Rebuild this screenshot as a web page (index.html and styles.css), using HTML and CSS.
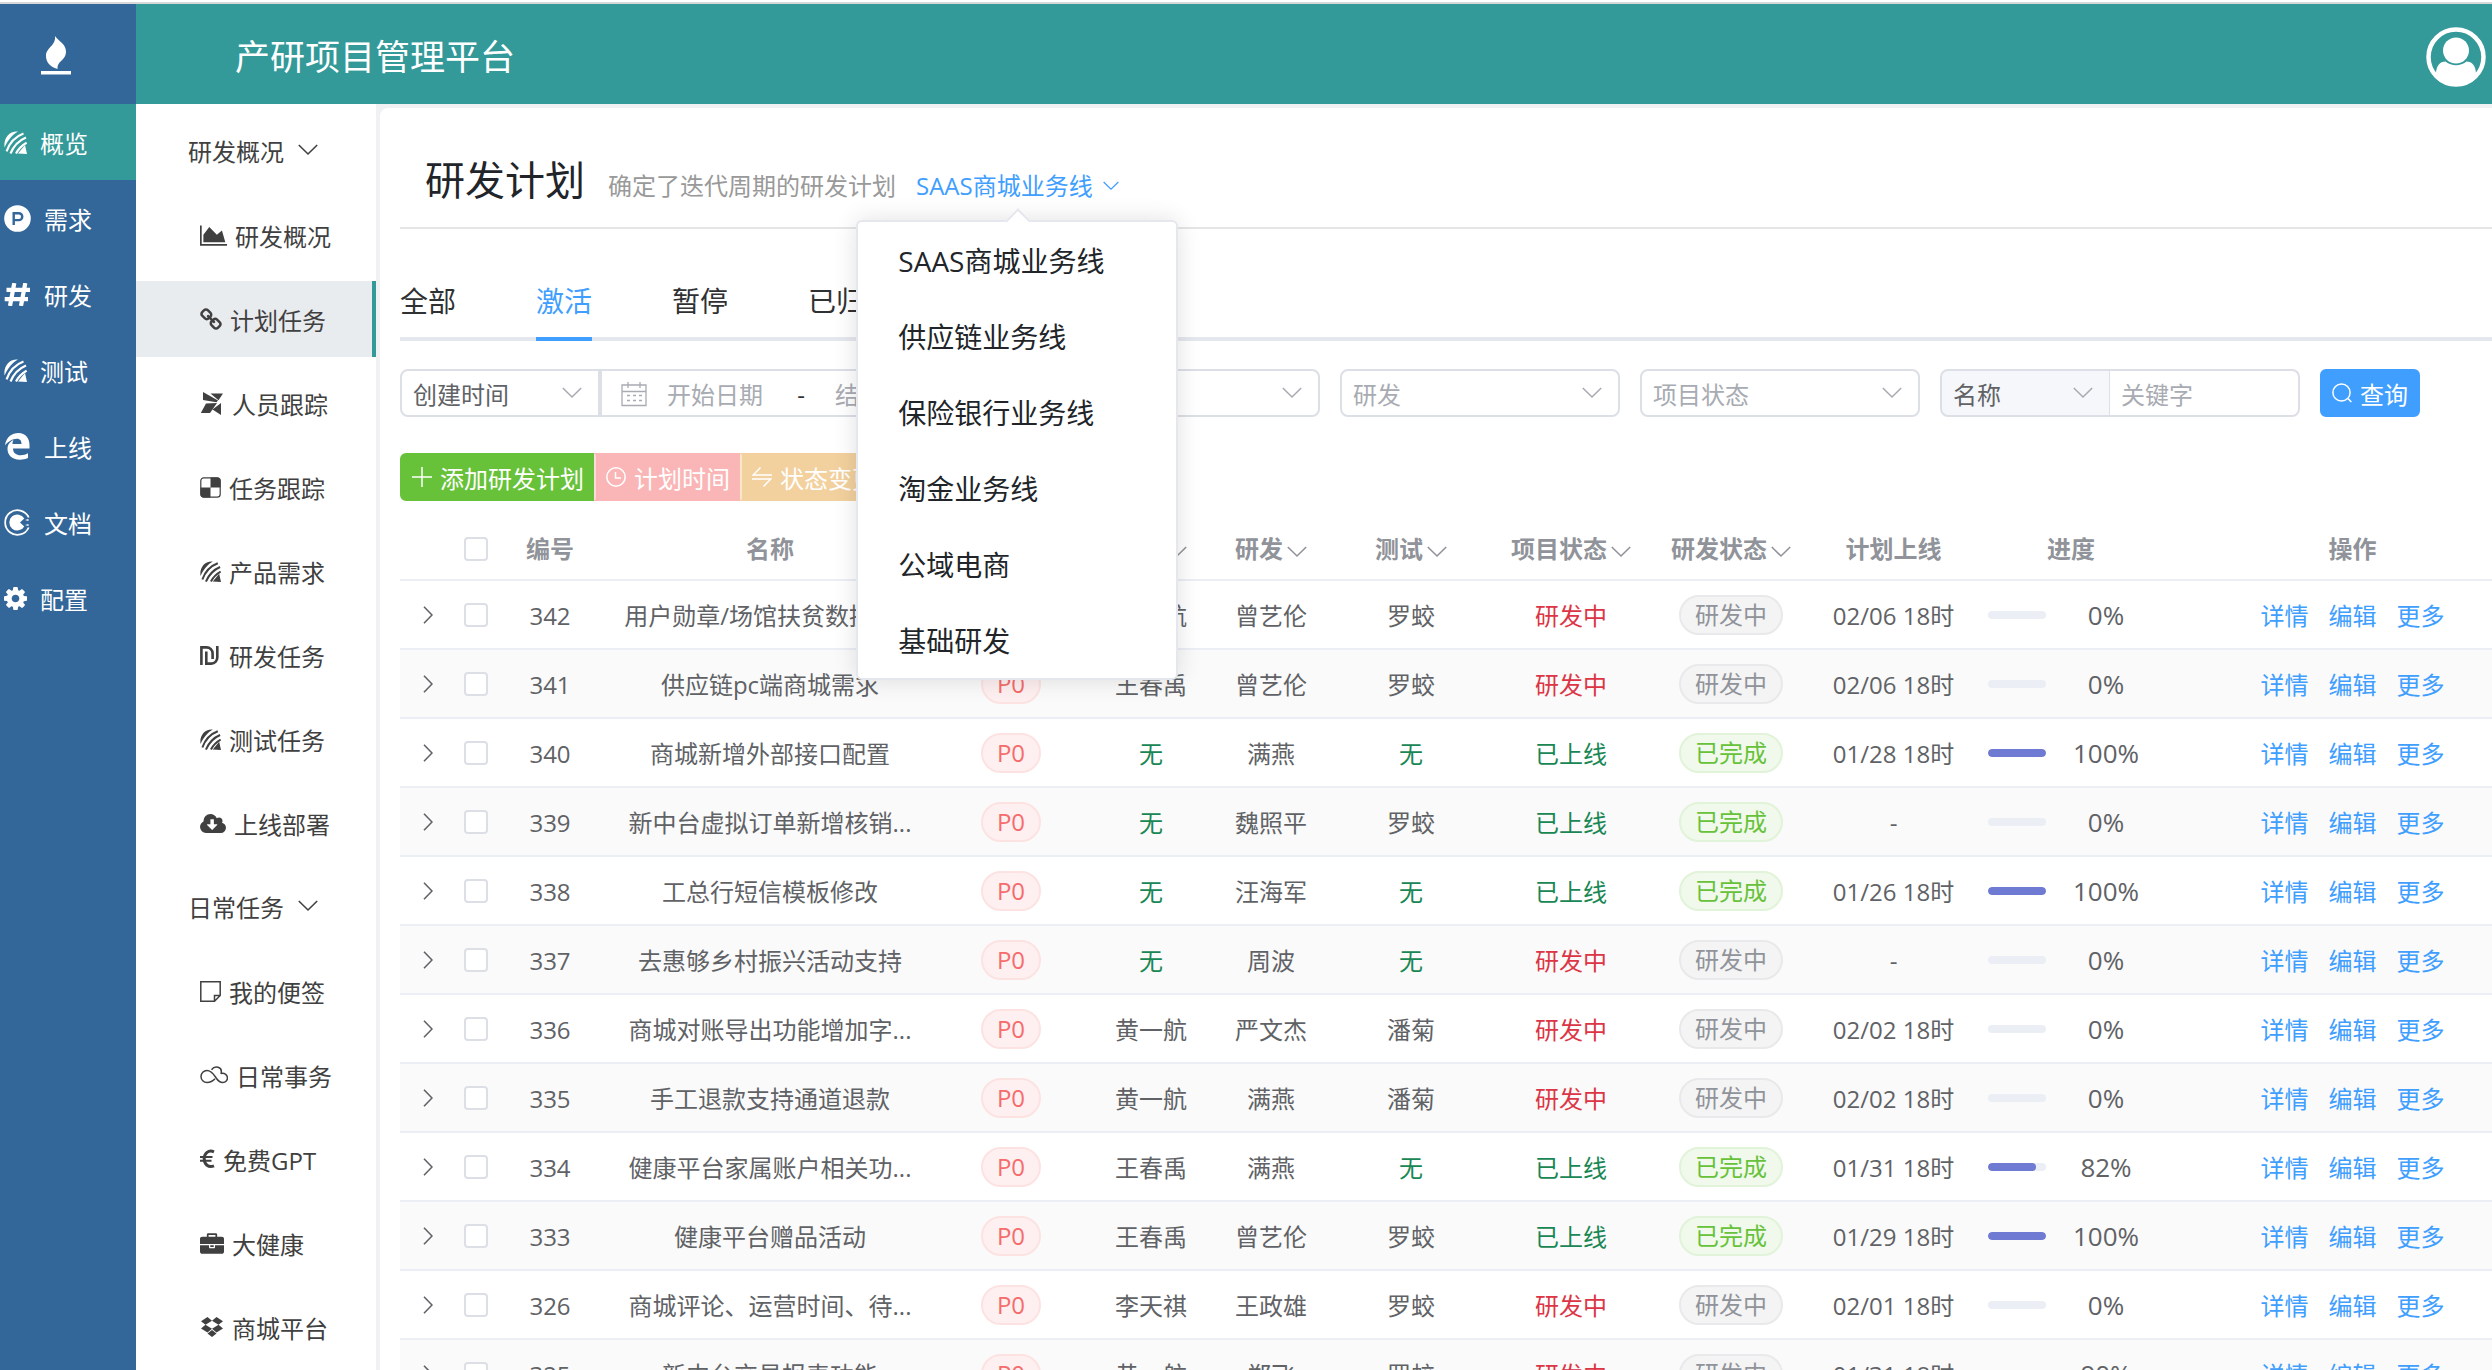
FILE: index.html
```html
<!DOCTYPE html>
<html lang="zh-CN">
<head>
<meta charset="utf-8">
<title>产研项目管理平台</title>
<link rel="stylesheet" href="styles.css">
</head>
<body>
<svg class="sprite" aria-hidden="true">
  <symbol id="bee" viewBox="0 0 23 23"><path fill="currentColor" d="M.6 16.500C-.8 7.500 5 -.3 14 .5 8.500 3.500 3.500 9.500.6 16.500z"/><path fill="none" stroke="currentColor" stroke-width="2.200" d="M2.600 20.300C5.500 12 11.500 5.500 19.500 2.500M6.500 22.500C9.500 15.500 14.500 9.800 22 6.600M12 22.500C14 18.500 17 14.800 22.600 11.600"/><path fill="currentColor" d="M14 22.500 21 14l2 9z"/></symbol>
  <symbol id="down" viewBox="0 0 20 12"><path fill="none" stroke="currentColor" stroke-width="1.600" d="m.8 1 9.200 9 9.200-9"/></symbol>
  <symbol id="right" viewBox="0 0 10 18"><path fill="none" stroke="currentColor" stroke-width="1.600" d="m1 .8 8 8.200-8 8.200"/></symbol>
  <symbol id="cog" viewBox="128 128 1536 1536"><path fill="currentColor" d="M1152 896q0-106-75-181t-181-75-181 75-75 181 75 181 181 75 181-75 75-181zm512-109v222q0 12-8 23t-20 13l-185 28q-19 54-39 91 35 50 107 138 10 12 10 25t-9 23q-27 37-99 108t-94 71q-12 0-26-9l-138-108q-44 23-91 38-16 136-29 186-7 28-36 28h-222q-14 0-24.500-8.500t-11.500-21.500l-28-184q-49-16-90-37l-141 107q-10 9-25 9-14 0-25-11-126-114-165-168-7-10-7-23 0-12 8-23 15-21 51-66.500t54-70.500q-27-50-41-99l-183-27q-13-2-21-12.500t-8-23.500v-222q0-12 8-23t19-13l186-28q14-46 39-92-40-57-107-138-10-12-10-24 0-10 9-23 26-36 98.500-107.500t94.500-71.500q13 0 26 10l138 107q44-23 91-38 16-136 29-186 7-28 36-28h222q14 0 24.500 8.500t11.500 21.500l28 184q49 16 90 37l142-107q9-9 24-9 13 0 25 10 129 119 165 170 7 8 7 22 0 12-8 23-15 21-51 66.500t-54 70.500q26 50 41 98l183 28q13 2 21 12.500t8 23.500z"/></symbol>
</svg>
<div class="app">
  <header class="topbar">
    <a class="logo" href="#" aria-label="首页"><svg width="30" height="39" viewBox="0 0 30 39" fill="currentColor"><path d="M14 0C18 6 25 7.500 25 16 25 24.500 15.500 25 16.500 33 9 31 5 26 5 20 5 11.500 15 10 14 0z"/><path d="M0 35h30v3.500H0z"/></svg></a>
    <div class="brand">
      <h1>产研项目管理平台</h1>
      <button class="avatar" type="button" aria-label="用户"><svg width="60" height="60" viewBox="-30 -30 60 60"><circle r="27.500" fill="none" stroke="currentColor" stroke-width="4.500"/><ellipse cy="-6.500" rx="13" ry="13" fill="currentColor"/><path fill="currentColor" d="M-20 17C-20 9-16 4.500-10.500 4.500-4 9.500 4 9.500 10.500 4.500 16 4.500 20 9 20 17 9 30-9 30-20 17z"/></svg></button>
    </div>
  </header>
  <div class="shell">
    <nav class="rail">
      <a class="on" href="#"><svg width="23" height="23"><use href="#bee"/></svg>概览</a>
      <a href="#"><svg width="27" height="27" viewBox="0 0 27 27"><circle cx="13.500" cy="13.500" r="13.300" fill="currentColor"/><path fill="none" stroke="#336699" stroke-width="2.400" d="M9.700 20V8.200h5.100a3.400 3.400 0 0 1 0 6.900H9.700"/></svg>需求</a>
      <a href="#"><svg width="27" height="23" viewBox="0 0 27 23"><path fill="none" stroke="currentColor" stroke-width="4.200" d="M10.300 0 6 23M21.300 0 17 23M2.500 6.800H26M.7 16.200H24"/></svg>研发</a>
      <a href="#"><svg width="23" height="23"><use href="#bee"/></svg>测试</a>
      <a href="#"><svg width="27" height="27" viewBox="0 0 27 27"><path fill="currentColor" d="M1 12.500C2 4 8 0 14.500 0 21.500 0 25.500 5 25.500 12v3.500H9c0 4.500 3.500 6.800 7.500 6.800 3 0 5.500-.8 7.500-2V25c-2.500 1.200-5.500 1.700-8 1.700-8.500 0-12.500-5.200-12.500-10.700 0-5 3-7.500 6-9C8.700 8.300 8.500 9.800 8.500 11h9c0-3-1.200-5.300-4.500-5.300C8.500 5.700 4 8.500 1 12.500z"/></svg>上线</a>
      <a href="#"><svg width="27" height="27" viewBox="0 0 27 27"><path fill="none" stroke="currentColor" stroke-width="1.800" d="M24.700 8.500a12.300 12.300 0 1 0 0 10"/><path fill="currentColor" d="M20.300 9.600a8 8 0 1 0 0 7.800L16 13.500zM21 11l3.500-1v2zM21 16l3.500 1v-2z"/></svg>文档</a>
      <a href="#"><svg width="23" height="23"><use href="#cog"/></svg>配置</a>
    </nav>
    <nav class="side">
      <button class="group" type="button">研发概况<svg width="20" height="12"><use href="#down"/></svg></button>
      <a href="#"><svg width="27" height="21" viewBox="0 128 2048 1536"><path fill="currentColor" d="M2048 1536v128H0V128h128v1408h1920zM1664 512l256 896H256V832l448-576 576 576z"/></svg>研发概况</a>
      <a class="on" href="#"><svg width="22" height="22" viewBox="64 0 1664 1664"><path fill="currentColor" d="M1520 1216q0-40-28-68l-208-208q-28-28-68-28-42 0-72 32 3 3 19 18.500t21.500 21.500 15 19 13 25.500 3.500 27.500q0 40-28 68t-68 28q-15 0-27.500-3.500t-25.500-13-19-15-21.500-21.500-18.500-19q-33 31-33 73 0 40 28 68l206 207q27 27 68 27 40 0 68-26l147-146q28-28 28-67zm-703-705q0-40-28-68l-206-207q-28-28-68-28-39 0-68 27l-147 146q-28 28-28 67 0 40 28 68l208 208q27 27 68 27 42 0 72-31-3-3-19-18.500t-21.500-21.500-15-19-13-25.500-3.500-27.500q0-40 28-68t68-28q15 0 27.500 3.500t25.500 13 19 15 21.500 21.500 18.500 19q33-31 33-73zm895 705q0 120-85 203l-147 146q-83 83-203 83-121 0-204-85l-206-207q-83-83-83-203 0-123 88-209l-88-88q-86 88-208 88-120 0-204-84l-208-208q-84-84-84-204t85-203l147-146q83-83 203-83 121 0 204 85l206 207q83 83 83 203 0 123-88 209l88 88q86-88 208-88 120 0 204 84l208 208q84 84 84 204z"/></svg>计划任务</a>
      <a href="#"><svg width="24" height="23" viewBox="0 0 24 23" fill="currentColor"><path d="M3 0l15 8.500-1.500 1.800L3 8zM10.500 1.500H23L18.500 8.300zM.8 21 6 11.500 17 11l-7 10zM21 11v12l-8.500-5.500z"/></svg>人员跟踪</a>
      <a href="#"><svg width="21" height="21" viewBox="0 0 21 21"><rect x=".8" y=".8" width="19.400" height="19.400" rx="3" fill="none" stroke="currentColor" stroke-width="1.200"/><path fill="currentColor" d="M10.500.5H17a3.500 3.500 0 0 1 3.500 3.500v6.500h-10zM.5 10.500h10v10H4A3.500 3.500 0 0 1 .5 17z"/></svg>任务跟踪</a>
      <a href="#"><svg width="21" height="21"><use href="#bee"/></svg>产品需求</a>
      <a href="#"><svg width="21" height="19" viewBox="0 0 21 19"><path fill="none" stroke="currentColor" stroke-width="2.600" d="M1.400 19V1.400h5.200a6 6 0 0 1 6 6V13M6.300 5.500v12.100h5a6 6 0 0 0 6-6V0"/></svg>研发任务</a>
      <a href="#"><svg width="21" height="21"><use href="#bee"/></svg>测试任务</a>
      <a href="#"><svg width="26" height="19" viewBox="-64 128 1920 1408"><path fill="currentColor" d="M1216 928q0-14-9-23t-23-9h-224v-352q0-13-9.500-22.500t-22.500-9.500h-192q-13 0-22.500 9.500t-9.500 22.500v352h-224q-13 0-22.500 9.500t-9.500 22.500q0 14 9 23l352 352q9 9 23 9t23-9l351-351q10-12 10-24zm640 224q0 159-112.500 271.500t-271.500 112.500h-1088q-185 0-316.500-131.500t-131.500-316.500q0-130 70-240t188-165q-2-30-2-43 0-212 150-362t362-150q156 0 285.500 87t188.500 231q71-62 166-62 106 0 181 75t75 181q0 76-41 138 130 31 213.500 135.500t83.500 238.500z"/></svg>上线部署</a>
      <button class="group" type="button">日常任务<svg width="20" height="12"><use href="#down"/></svg></button>
      <a href="#"><svg width="21" height="21" viewBox="0 0 21 21"><path fill="none" stroke="currentColor" stroke-width="1.500" d="M14.500 20.200H.8V.8h19.400v13.700zv-5.700h5.700"/></svg>我的便签</a>
      <a href="#"><svg width="28" height="18" viewBox="0 0 28 18"><path fill="none" stroke="currentColor" stroke-width="1.500" d="M15 12.800C12.500 15.500 9.800 16.500 7 16.500A6 6 0 0 1 7 4.500c5 0 7 4.500 9.500 8 2 2.800 4 4 6.200 4a4.600 4.600 0 1 0-1.200-9M11.500 3.800C14.500-.5 23 0 21 8"/></svg>日常事务</a>
      <a href="#"><svg width="15" height="20" viewBox="0 0 15 20"><path fill="none" stroke="currentColor" stroke-width="3" d="M14 2.800C8.500.5 4.200 4.200 4.200 9.800S8.500 19 14 16.800"/><path fill="none" stroke="currentColor" stroke-width="1.900" d="M0 8h12.500M0 11.700h11.500"/></svg>免费GPT</a>
      <a href="#"><svg width="24" height="21" viewBox="0 0 1792 1536"><path fill="currentColor" d="M640 256h512v-128h-512v128zm1152 640v480q0 66-47 113t-113 47h-1472q-66 0-113-47t-47-113v-480h672v160q0 26 19 45t45 19h320q26 0 45-19t19-45v-160h672zm-768 0v128h-256v-128h256zm768-480v384h-1792v-384q0-66 47-113t113-47h352v-160q0-40 28-68t68-28h576q40 0 68 28t28 68v160h352q66 0 113 47t47 113z"/></svg>大健康</a>
      <a href="#"><svg width="24" height="20" viewBox="-1 0 24 20" fill="currentColor"><path d="M6.500 0 0 4.200l4.500 3.600 6.500-4zM15.500 0 22 4.200l-4.500 3.600-6.500-4zM0 11.500l4.500-3.700 6.500 4-4.500 3.700zM22 11.500l-4.500-3.700-6.500 4 4.500 3.700zM6.500 16.500 11 13l4.500 3.500L11 20z"/></svg>商城平台</a>
    </nav>
    <main class="main">
      <div class="content">
        <div class="page-head">
          <h2>研发计划</h2>
          <p>确定了迭代周期的研发计划</p>
          <div class="line-picker">
            <button class="line-now" type="button" aria-haspopup="true" aria-expanded="true">SAAS商城业务线<svg width="16" height="10"><use href="#down"/></svg></button>
            <ul class="menu">
              <li><a href="#">SAAS商城业务线</a></li>
              <li><a href="#">供应链业务线</a></li>
              <li><a href="#">保险银行业务线</a></li>
              <li><a href="#">淘金业务线</a></li>
              <li><a href="#">公域电商</a></li>
              <li><a href="#">基础研发</a></li>
            </ul>
          </div>
        </div>
        <div class="tabs" role="tablist">
          <button type="button" role="tab">全部</button>
          <button type="button" role="tab" class="on" aria-selected="true">激活</button>
          <button type="button" role="tab">暂停</button>
          <button type="button" role="tab">已归档</button>
        </div>
        <form class="filters">
          <div class="joined">
            <select class="field kind" aria-label="时间类型"><option>创建时间</option></select>
            <div class="field dates">
              <svg width="26" height="26" viewBox="0 0 26 26"><path fill="none" stroke="currentColor" stroke-width="1.300" d="M1 4h24v20.500H1zM1 10.500h24M7 1v6M19 1v6"/><path fill="none" stroke="currentColor" stroke-width="1.600" stroke-dasharray="3 3" d="M6 14.500h15M6 19.500h15"/></svg>
              <input type="text" placeholder="开始日期" aria-label="开始日期"><span>-</span><input type="text" placeholder="结束日期" aria-label="结束日期">
            </div>
          </div>
          <select class="field pick" aria-label="产品"><option>产品</option></select>
          <select class="field pick" aria-label="研发"><option>研发</option></select>
          <select class="field pick" aria-label="项目状态"><option>项目状态</option></select>
          <div class="joined">
            <select class="field by" aria-label="搜索字段"><option>名称</option></select>
            <input class="field key" type="text" placeholder="关键字" aria-label="关键字">
          </div>
          <button class="btn search" type="button"><svg width="20" height="20" viewBox="0 0 20 20"><path fill="none" stroke="currentColor" stroke-width="1.500" d="M16 15.500 19.300 19"/><circle cx="9.500" cy="9.500" r="8.600" fill="none" stroke="currentColor" stroke-width="1.500"/></svg>查询</button>
        </form>
        <div class="actions">
          <button class="btn add" type="button"><svg width="20" height="20" viewBox="0 0 20 20"><path stroke="currentColor" stroke-width="1.500" d="M10 0v20M0 10h20"/></svg>添加研发计划</button>
          <button class="btn time" type="button"><svg width="20" height="20" viewBox="0 0 20 20"><path fill="none" stroke="currentColor" stroke-width="1.500" d="M9.500 5v6H15"/><circle cx="10" cy="10" r="9.200" fill="none" stroke="currentColor" stroke-width="1.500"/></svg>计划时间</button>
          <button class="btn state" type="button"><svg width="20" height="20" viewBox="0 0 20 20"><path fill="none" stroke="currentColor" stroke-width="1.500" d="M8.500.5 1.200 8H20M0 12h18.800l-7.300 7.500"/></svg>状态变更</button>
        </div>
        <table class="plans">
          <colgroup><col class="w56"><col class="w40"><col class="w108"><col><col class="w150"><col class="w130"><col class="w110"><col class="w170"><col class="w150"><col class="w170"><col class="w155"><col class="w200"><col class="ops-col"></colgroup>
          <thead><tr><th></th><th><input type="checkbox" aria-label="全选"></th><th>编号</th><th>名称</th><th>优先级</th><th>产品<svg width="20" height="12"><use href="#down"/></svg></th><th>研发<svg width="20" height="12"><use href="#down"/></svg></th><th>测试<svg width="20" height="12"><use href="#down"/></svg></th><th>项目状态<svg width="20" height="12"><use href="#down"/></svg></th><th>研发状态<svg width="20" height="12"><use href="#down"/></svg></th><th>计划上线</th><th>进度</th><th class="ops">操作</th></tr></thead>
          <tbody>
            <tr><td class="ctl"><svg width="10" height="18"><use href="#right"/></svg></td><td class="ctl"><input type="checkbox" aria-label="选择342"></td><td>342</td><td class="name">用户勋章/场馆扶贫数据统...</td><td class="ctl"><span class="tag p0">P0</span></td><td>黄一航</td><td>曾艺伦</td><td>罗蛟</td><td class="red">研发中</td><td class="ctl"><span class="tag">研发中</span></td><td>02/06 18时</td><td class="ctl"><div class="prog"><i><b style="width:0%"></b></i><span>0%</span></div></td><td class="ops"><a href="#">详情</a><a href="#">编辑</a><a href="#">更多</a></td></tr>
            <tr><td class="ctl"><svg width="10" height="18"><use href="#right"/></svg></td><td class="ctl"><input type="checkbox" aria-label="选择341"></td><td>341</td><td class="name">供应链pc端商城需求</td><td class="ctl"><span class="tag p0">P0</span></td><td>王春禹</td><td>曾艺伦</td><td>罗蛟</td><td class="red">研发中</td><td class="ctl"><span class="tag">研发中</span></td><td>02/06 18时</td><td class="ctl"><div class="prog"><i><b style="width:0%"></b></i><span>0%</span></div></td><td class="ops"><a href="#">详情</a><a href="#">编辑</a><a href="#">更多</a></td></tr>
            <tr><td class="ctl"><svg width="10" height="18"><use href="#right"/></svg></td><td class="ctl"><input type="checkbox" aria-label="选择340"></td><td>340</td><td class="name">商城新增外部接口配置</td><td class="ctl"><span class="tag p0">P0</span></td><td class="green">无</td><td>满燕</td><td class="green">无</td><td class="green">已上线</td><td class="ctl"><span class="tag done">已完成</span></td><td>01/28 18时</td><td class="ctl"><div class="prog"><i><b style="width:100%"></b></i><span>100%</span></div></td><td class="ops"><a href="#">详情</a><a href="#">编辑</a><a href="#">更多</a></td></tr>
            <tr><td class="ctl"><svg width="10" height="18"><use href="#right"/></svg></td><td class="ctl"><input type="checkbox" aria-label="选择339"></td><td>339</td><td class="name">新中台虚拟订单新增核销...</td><td class="ctl"><span class="tag p0">P0</span></td><td class="green">无</td><td>魏照平</td><td>罗蛟</td><td class="green">已上线</td><td class="ctl"><span class="tag done">已完成</span></td><td>-</td><td class="ctl"><div class="prog"><i><b style="width:0%"></b></i><span>0%</span></div></td><td class="ops"><a href="#">详情</a><a href="#">编辑</a><a href="#">更多</a></td></tr>
            <tr><td class="ctl"><svg width="10" height="18"><use href="#right"/></svg></td><td class="ctl"><input type="checkbox" aria-label="选择338"></td><td>338</td><td class="name">工总行短信模板修改</td><td class="ctl"><span class="tag p0">P0</span></td><td class="green">无</td><td>汪海军</td><td class="green">无</td><td class="green">已上线</td><td class="ctl"><span class="tag done">已完成</span></td><td>01/26 18时</td><td class="ctl"><div class="prog"><i><b style="width:100%"></b></i><span>100%</span></div></td><td class="ops"><a href="#">详情</a><a href="#">编辑</a><a href="#">更多</a></td></tr>
            <tr><td class="ctl"><svg width="10" height="18"><use href="#right"/></svg></td><td class="ctl"><input type="checkbox" aria-label="选择337"></td><td>337</td><td class="name">去惠够乡村振兴活动支持</td><td class="ctl"><span class="tag p0">P0</span></td><td class="green">无</td><td>周波</td><td class="green">无</td><td class="red">研发中</td><td class="ctl"><span class="tag">研发中</span></td><td>-</td><td class="ctl"><div class="prog"><i><b style="width:0%"></b></i><span>0%</span></div></td><td class="ops"><a href="#">详情</a><a href="#">编辑</a><a href="#">更多</a></td></tr>
            <tr><td class="ctl"><svg width="10" height="18"><use href="#right"/></svg></td><td class="ctl"><input type="checkbox" aria-label="选择336"></td><td>336</td><td class="name">商城对账导出功能增加字...</td><td class="ctl"><span class="tag p0">P0</span></td><td>黄一航</td><td>严文杰</td><td>潘菊</td><td class="red">研发中</td><td class="ctl"><span class="tag">研发中</span></td><td>02/02 18时</td><td class="ctl"><div class="prog"><i><b style="width:0%"></b></i><span>0%</span></div></td><td class="ops"><a href="#">详情</a><a href="#">编辑</a><a href="#">更多</a></td></tr>
            <tr><td class="ctl"><svg width="10" height="18"><use href="#right"/></svg></td><td class="ctl"><input type="checkbox" aria-label="选择335"></td><td>335</td><td class="name">手工退款支持通道退款</td><td class="ctl"><span class="tag p0">P0</span></td><td>黄一航</td><td>满燕</td><td>潘菊</td><td class="red">研发中</td><td class="ctl"><span class="tag">研发中</span></td><td>02/02 18时</td><td class="ctl"><div class="prog"><i><b style="width:0%"></b></i><span>0%</span></div></td><td class="ops"><a href="#">详情</a><a href="#">编辑</a><a href="#">更多</a></td></tr>
            <tr><td class="ctl"><svg width="10" height="18"><use href="#right"/></svg></td><td class="ctl"><input type="checkbox" aria-label="选择334"></td><td>334</td><td class="name">健康平台家属账户相关功...</td><td class="ctl"><span class="tag p0">P0</span></td><td>王春禹</td><td>满燕</td><td class="green">无</td><td class="green">已上线</td><td class="ctl"><span class="tag done">已完成</span></td><td>01/31 18时</td><td class="ctl"><div class="prog"><i><b style="width:82%"></b></i><span>82%</span></div></td><td class="ops"><a href="#">详情</a><a href="#">编辑</a><a href="#">更多</a></td></tr>
            <tr><td class="ctl"><svg width="10" height="18"><use href="#right"/></svg></td><td class="ctl"><input type="checkbox" aria-label="选择333"></td><td>333</td><td class="name">健康平台赠品活动</td><td class="ctl"><span class="tag p0">P0</span></td><td>王春禹</td><td>曾艺伦</td><td>罗蛟</td><td class="green">已上线</td><td class="ctl"><span class="tag done">已完成</span></td><td>01/29 18时</td><td class="ctl"><div class="prog"><i><b style="width:100%"></b></i><span>100%</span></div></td><td class="ops"><a href="#">详情</a><a href="#">编辑</a><a href="#">更多</a></td></tr>
            <tr><td class="ctl"><svg width="10" height="18"><use href="#right"/></svg></td><td class="ctl"><input type="checkbox" aria-label="选择326"></td><td>326</td><td class="name">商城评论、运营时间、待...</td><td class="ctl"><span class="tag p0">P0</span></td><td>李天祺</td><td>王政雄</td><td>罗蛟</td><td class="red">研发中</td><td class="ctl"><span class="tag">研发中</span></td><td>02/01 18时</td><td class="ctl"><div class="prog"><i><b style="width:0%"></b></i><span>0%</span></div></td><td class="ops"><a href="#">详情</a><a href="#">编辑</a><a href="#">更多</a></td></tr>
            <tr><td class="ctl"><svg width="10" height="18"><use href="#right"/></svg></td><td class="ctl"><input type="checkbox" aria-label="选择325"></td><td>325</td><td class="name">新中台交易报表功能</td><td class="ctl"><span class="tag p0">P0</span></td><td>黄一航</td><td>郑飞</td><td>罗蛟</td><td class="red">研发中</td><td class="ctl"><span class="tag">研发中</span></td><td>01/31 18时</td><td class="ctl"><div class="prog"><i><b style="width:90%"></b></i><span>90%</span></div></td><td class="ops"><a href="#">详情</a><a href="#">编辑</a><a href="#">更多</a></td></tr>
          </tbody>
        </table>
      </div>
    </main>
  </div>
</div>
</body>
</html>
```
FILE: styles.css
```css
* { box-sizing: border-box; }
body, h1, h2, p, ul { margin: 0; padding: 0; }
body {
  font-family: "Open Sans", "Noto Sans CJK SC", sans-serif;
  font-size: 24px;
  color: #606266;
  background: #fff;
}
a { color: inherit; text-decoration: none; }
button, input, select { font: inherit; color: inherit; }
button { background: none; border: 0; padding: 0; margin: 0; cursor: pointer; }
svg { flex: none; }
.sprite { display: none; }

.app { display: flex; flex-direction: column; height: 100vh; overflow: hidden; padding-top: 2px; }

/* top bar */
.topbar { display: flex; flex: none; height: 102px; border-top: 2px solid #d8d8d8; color: #fff; }
.logo { width: 136px; background: #336699; display: flex; align-items: center; padding: 2px 0 0 41px; }
.brand { flex: 1; background: #339999; display: flex; align-items: center; justify-content: space-between; padding: 6px 6px 0 99px; }
.brand h1 { font-size: 35px; font-weight: 400; line-height: 48px; }
.avatar { color: #fff; display: flex; }

.shell { flex: 1; min-height: 0; display: flex; }

/* primary navigation */
.rail { flex: none; width: 136px; background: #336699; color: #fff; }
.rail a { display: flex; align-items: center; height: 76px; padding: 0 0 0 4px; gap: 13px; }
.rail .on { background: #339999; }

/* secondary navigation */
.side { flex: none; width: 240px; padding-top: 9px; color: #404040; overflow: hidden; display: flex; flex-direction: column; gap: 8px; }
.side a, .side .group { display: flex; flex: none; align-items: center; height: 76px; padding: 0 0 0 64px; gap: 8px; }
.side .group { padding: 0 0 2px 52px; gap: 14px; }
.side .on { background: #e9ecef; border-right: 4px solid #339999; }

/* content */
.main { flex: 1; min-width: 0; background: #eff1f2; padding: 4px 0 0 4px; }
.content { height: 100%; background: #fff; border-radius: 8px 0 0 0; padding-left: 20px; }

.page-head { display: flex; align-items: baseline; padding: 42px 0 17px 25px; border-bottom: 2px solid #e5e5e5; }
.page-head h2 { font-size: 40px; font-weight: 400; line-height: 60px; color: #212529; }
.page-head p { margin: 0 20px 0 23px; color: #999; line-height: 36px; }
.line-picker { position: relative; line-height: 36px; }
.line-now { color: #409eff; display: flex; align-items: center; gap: 10px; line-height: 36px; }
.menu {
  position: absolute; z-index: 5; top: calc(100% + 16px); left: calc(50% - 161px); width: 322px;
  list-style: none; background: #fff; border: 2px solid #e4e7ed; border-radius: 6px;
  box-shadow: 0 0 24px rgba(0, 0, 0, .12);
}
.menu::before {
  content: ""; position: absolute; top: -10px; left: calc(50% - 8px); width: 16px; height: 16px;
  background: #fff; border: solid #e4e7ed; border-width: 2px 0 0 2px; transform: rotate(45deg);
}
.menu a { position: relative; display: block; height: 76px; padding: 1px 0 0 40px; font-size: 28px; line-height: 76px; color: #212529; }

.tabs { display: flex; gap: 80px; margin-top: 32px; border-bottom: 4px solid #e4e7ed; }
.tabs button { height: 80px; padding-top: 4px; font-size: 28px; line-height: 72px; color: #303133; border-bottom: 4px solid transparent; margin-bottom: -4px; }
.tabs .on { color: #409eff; border-color: #409eff; }

/* filters */
.filters { display: flex; gap: 20px; margin-top: 28px; }
.joined { display: flex; }
.field { height: 48px; border: 2px solid #dcdfe6; border-radius: 8px; padding: 2px 11px 0; background: #fff; color: #606266; }
select.field {
  appearance: none;
  background: #fff url("data:image/svg+xml,%3Csvg xmlns='http://www.w3.org/2000/svg' viewBox='0 0 20 12'%3E%3Cpath fill='none' stroke='%23a8abb2' stroke-width='1.6' d='m.8 1 9.200 9 9.200-9'/%3E%3C/svg%3E") no-repeat right 16px center / 20px 12px;
}
.field::placeholder, .dates input::placeholder { color: #a8abb2; opacity: 1; }
.kind { width: 200px; border-radius: 8px 0 0 8px; }
.dates { width: 420px; border-radius: 0 8px 8px 0; display: flex; align-items: center; padding-left: 19px; color: #a8abb2; }
.dates input { width: 140px; border: 0; padding: 0 0 0 20px; background: none; }
.dates span { width: 28px; text-align: center; color: #303133; }
select.pick { width: 280px; color: #a8abb2; }
select.by { width: 170px; border-radius: 8px 0 0 8px; border-right-width: 1px; background-color: #f5f7fa; }
.key { width: 190px; border-radius: 0 8px 8px 0; border-left-width: 0; }

/* buttons */
.btn { display: flex; align-items: center; gap: 8px; height: 48px; padding: 0 10px; color: #fff; border: 2px solid transparent; }
.search { background: #409eff; border-color: #409eff; border-radius: 6px; }
.actions { display: flex; margin-top: 36px; }
.btn.add { background: #67c23a; border-color: #67c23a; border-radius: 6px 0 0 6px; }
.btn.time { background: #fab6b6; border-color: #fab6b6; border-left-color: #fcdada; margin-left: -2px; }
.btn.state { background: #f3d19e; border-color: #f3d19e; border-left-color: #f9e6c8; margin-left: -2px; border-radius: 0 6px 6px 0; }

/* table */
.plans { width: 100%; margin-top: 16px; border-collapse: separate; border-spacing: 0; table-layout: fixed; text-align: center; }
.w40 { width: 40px; } .w56 { width: 56px; } .w108 { width: 108px; } .w110 { width: 110px; }
.w130 { width: 130px; } .w150 { width: 150px; } .w155 { width: 155px; } .w170 { width: 170px; } .w200 { width: 200px; }
.ops-col { width: 321px; }
.plans th, .plans td { padding: 2px 0 0; border-bottom: 2px solid #ebeef5; white-space: nowrap; line-height: 40px; vertical-align: middle; }
.plans th { height: 64px; color: #909399; font-weight: 700; }
.plans td { height: 69px; }
.plans td.ctl { padding-top: 0; }
.plans tbody tr:nth-child(even) { background: #fafafa; }
.plans th svg { margin-left: 4px; }
.plans td > svg { display: block; margin: 0 auto; }
.plans .name { overflow: hidden; text-overflow: ellipsis; }
.plans input { appearance: none; display: block; width: 24px; height: 24px; margin: 0 auto; border: 2px solid #dcdfe6; border-radius: 4px; background: #fff; }
.tag { display: inline-block; vertical-align: top; height: 40px; line-height: 36px; padding: 0 14px; border: 2px solid #e9e9eb; border-radius: 20px; background: #f4f4f5; color: #909399; }
.p0 { background: #fef0f0; border-color: #fde2e2; color: #f56c6c; }
.done { background: #f0f9eb; border-color: #e1f3d8; color: #67c23a; }
.red { color: #dc3545; }
.green { color: #198754; }
.prog { display: flex; align-items: center; padding-left: 17px; font-size: 26px; }
.prog i { width: 58px; height: 8px; border-radius: 4px; background: #ebeef5; overflow: hidden; }
.prog b { display: block; height: 8px; border-radius: 4px; background: #6f7ad3; }
.prog span { width: 120px; }
.plans .ops { padding-left: 42px; }
.ops a { color: #409eff; }
.ops a + a { margin-left: 20px; }
```
